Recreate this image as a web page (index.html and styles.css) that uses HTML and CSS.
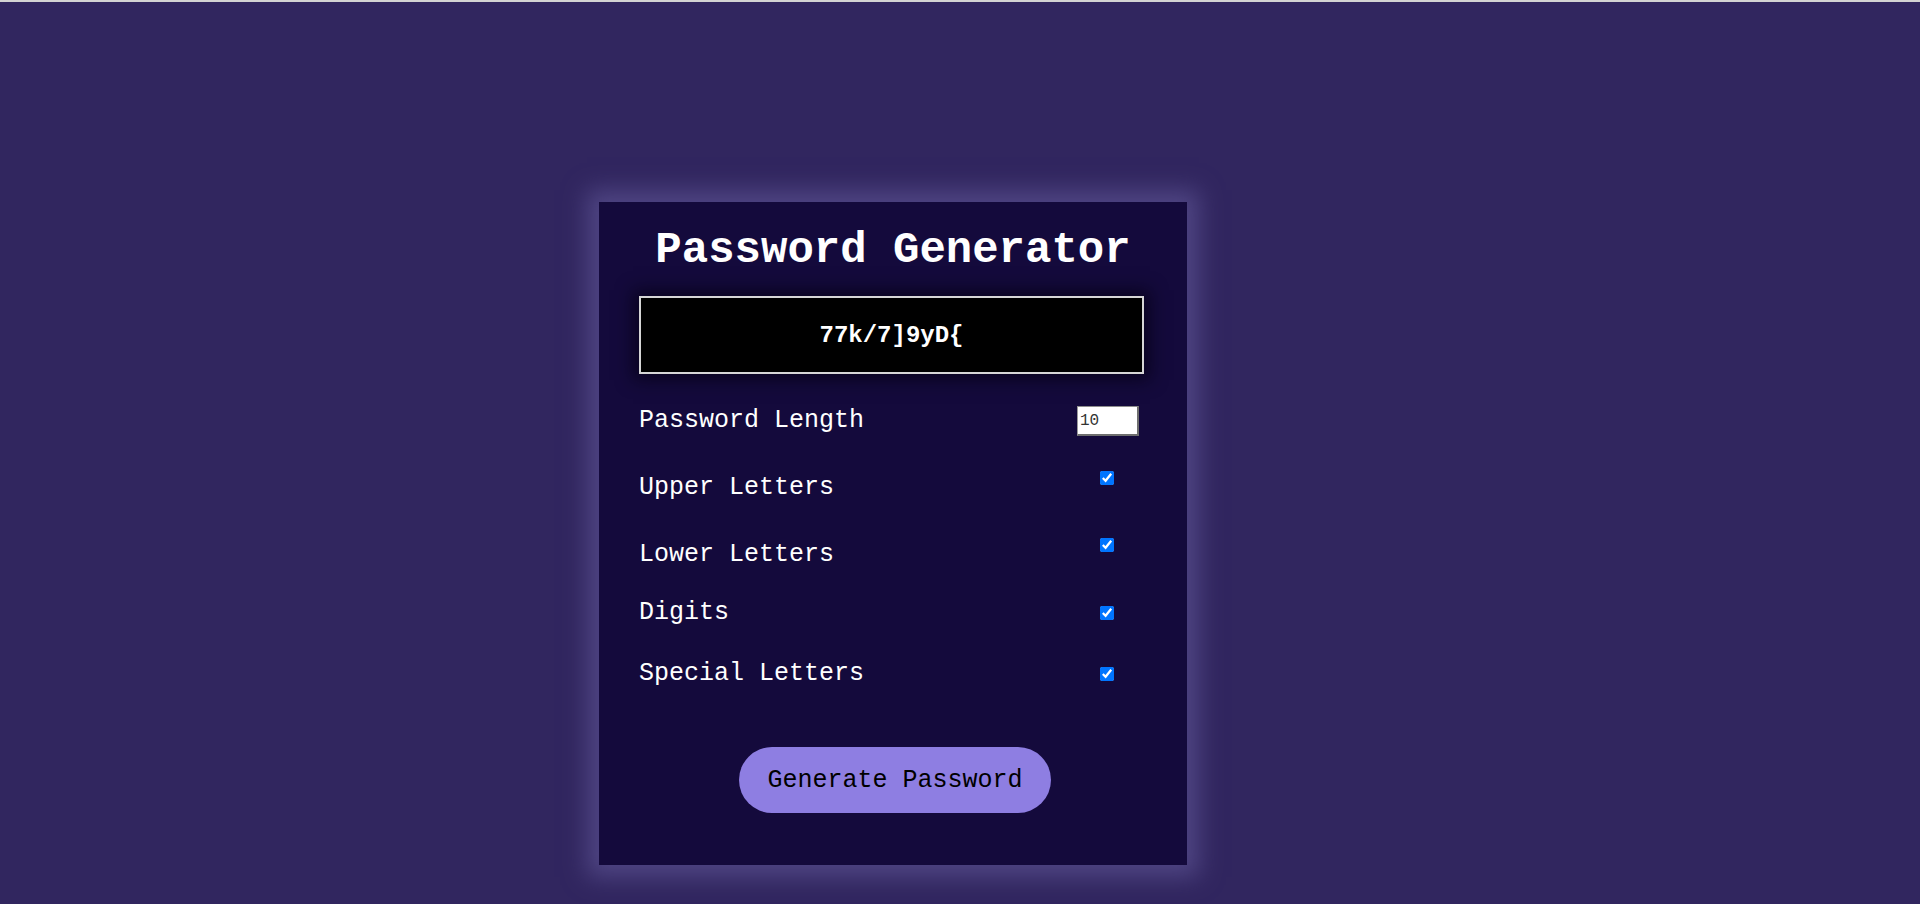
FILE: index.html
```html
<!DOCTYPE html>
<html lang="en">
<head>
<meta charset="utf-8">
<title>Password Generator</title>
<link rel="stylesheet" href="styles.css">
</head>
<body>
<div class="page">
  <main class="card">
    <h1 class="title">Password Generator</h1>
    <div class="display">77k/7]9yD{</div>
    <div class="settings">
      <div class="row row-length">
        <label class="label" for="len">Password Length</label>
        <div class="control"><input class="num" id="len" type="number" value="10"></div>
      </div>
      <div class="row row-upper">
        <label class="label label-low" for="up">Upper Letters</label>
        <div class="control"><input class="check" id="up" type="checkbox" checked></div>
      </div>
      <div class="row row-lower">
        <label class="label label-low" for="low">Lower Letters</label>
        <div class="control"><input class="check" id="low" type="checkbox" checked></div>
      </div>
      <div class="row row-digits">
        <label class="label" for="dig">Digits</label>
        <div class="control"><input class="check" id="dig" type="checkbox" checked></div>
      </div>
      <div class="row row-special">
        <label class="label" for="spe">Special Letters</label>
        <div class="control"><input class="check" id="spe" type="checkbox" checked></div>
      </div>
    </div>
    <div class="actions">
      <button class="generate" type="button">Generate Password</button>
    </div>
  </main>
</div>
</body>
</html>
```

FILE: styles.css
```css
html, body {
  margin: 0;
  padding: 0;
}

body {
  font-family: "Liberation Mono", "Courier New", monospace;
  background: #31265f;
}

.page {
  min-height: 904px;
  box-sizing: border-box;
  border-top: 2px solid #d3d3d3;
  background: #31265f;
  padding: 200px 0 0 599px;
  display: flex;
  align-items: flex-start;
}

.card {
  width: 588px;
  box-sizing: border-box;
  background: #140a3c;
  padding: 23px 40px 52px;
  box-shadow: 0 0 22px 12px #4f4583;
  display: flex;
  flex-direction: column;
}

.title {
  margin: 0 0 21px;
  font-size: 44px;
  line-height: 50px;
  font-weight: bold;
  color: #ffffff;
  text-align: center;
}

.display {
  width: 505px;
  height: 78px;
  box-sizing: border-box;
  border: 2px solid #d6d6d6;
  background: #000000;
  color: #ffffff;
  font-size: 24px;
  font-weight: bold;
  display: flex;
  align-items: center;
  justify-content: center;
  box-shadow: 0 0 16px 6px rgba(5, 2, 20, 0.7);
}

.settings {
  margin-top: 32px;
  width: 500px;
  display: flex;
  flex-direction: column;
}

.row {
  display: flex;
  justify-content: space-between;
  align-items: center;
}

.row-upper { margin-top: 17px; }
.row-lower { margin-top: 18px; }
.row-digits { margin-top: 30px; }
.row-special { margin-top: 33px; }

.label {
  font-size: 25px;
  line-height: 28px;
  color: #ffffff;
}

.label-low {
  padding-top: 21px;
}

.control {
  width: 62px;
  box-sizing: border-box;
  display: flex;
  justify-content: center;
  padding-right: 3px;
}

.num {
  width: 62px;
  height: 30px;
  box-sizing: border-box;
  margin: 0 -3px 0 0;
  padding: 0 2px;
  background: #ffffff;
  border-style: solid;
  border-width: 1px 2px 2px 1px;
  border-color: #8d8d8d #6e6e6e #6e6e6e #9a9a9a;
  font-family: "Liberation Mono", "Courier New", monospace;
  font-size: 16px;
  color: #333333;
}

.check {
  width: 14px;
  height: 14px;
  margin: 3px 3px 3px 4px;
}

.actions {
  margin-top: 59px;
  display: flex;
  justify-content: center;
  padding-left: 4px;
}

.generate {
  height: 66px;
  padding: 0 28px;
  border: none;
  border-radius: 33px;
  background: #8e7ee2;
  color: #000000;
  font-family: "Liberation Mono", "Courier New", monospace;
  font-size: 25px;
  cursor: pointer;
}
```
